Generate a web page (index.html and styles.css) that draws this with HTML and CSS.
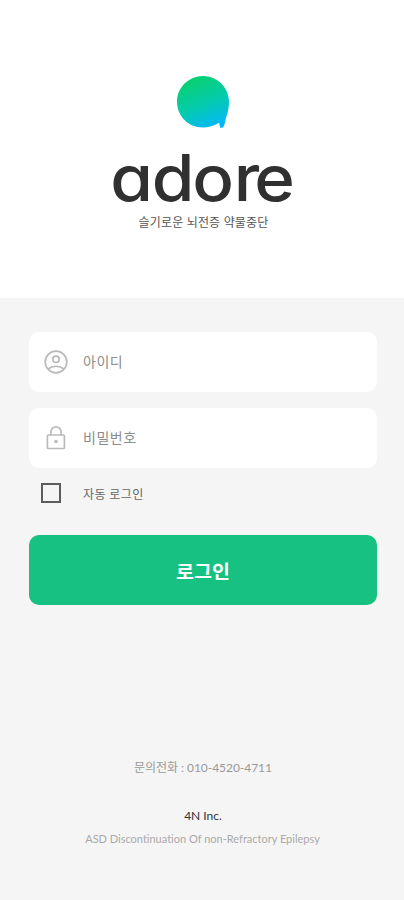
FILE: index.html
```html
<!DOCTYPE html>
<html lang="ko">
<head>
<meta charset="utf-8">
<meta name="viewport" content="width=device-width, initial-scale=1">
<title>adore</title>
<link rel="stylesheet" href="styles.css">
</head>
<body>
<header class="brand">
  <svg class="brand-mark" width="54" height="54" viewBox="0 0 54 54" aria-hidden="true">
    <defs>
      <linearGradient id="bubble" x1="0.3" y1="0.05" x2="0.7" y2="1">
        <stop offset="0" stop-color="#08d070"/>
        <stop offset="0.5" stop-color="#04ccaa"/>
        <stop offset="1" stop-color="#04b8f8"/>
      </linearGradient>
    </defs>
    <path fill="url(#bubble)" d="M27 1C12.600 1 1 12.600 1 27C1 41 12.600 52.500 26.500 52.500C32.500 52.500 38.500 51 43 47.800L44.300 52.700L47 52.700C48.500 50 49.300 47 49.800 43.500C51.800 38 53 33 53 27C53 12.600 41.400 1 27 1Z"/>
  </svg>
  <svg class="brand-name" width="190" height="80" viewBox="0 0 190 80">
    <text transform="scale(1.08 1)" x="2 40.500 78 116.500 135.500" y="53.500">adore</text>
  </svg>
  <p class="tagline">슬기로운 뇌전증 약물중단</p>
</header>
<main class="login">
  <label class="field">
    <svg class="icon" width="24" height="24" viewBox="0 0 24 24" aria-hidden="true">
      <circle cx="12" cy="12" r="10.800"/>
      <circle cx="12" cy="9.300" r="3.200"/>
      <path d="M4.300 19C8 15.300 16 15.300 19.700 19"/>
    </svg>
    <span>아이디</span>
  </label>
  <label class="field">
    <svg class="icon" width="24" height="26" viewBox="0 0 24 26" aria-hidden="true">
      <rect x="3.400" y="10" width="17" height="13.500" rx="1"/>
      <path d="M6.800 10V7A5.200 5.200 0 0 1 17.200 7V10"/>
      <circle class="keyhole" cx="12" cy="16.500" r="1.800"/>
    </svg>
    <span>비밀번호</span>
  </label>
  <label class="remember"><span class="box"></span><span>자동 로그인</span></label>
  <button class="submit" type="button">로그인</button>
</main>
<footer class="footer">
  <p class="phone">문의전화 : 010-4520-4711</p>
  <p class="company">4N Inc.</p>
  <p class="about">ASD Discontinuation Of non-Refractory Epilepsy</p>
</footer>
</body>
</html>
```
FILE: styles.css
```css
* { box-sizing: border-box; }
body {
  margin: 0;
  height: 900px;
  display: flex;
  flex-direction: column;
  background: #f5f5f5;
  font-family: Lato, "Noto Sans CJK KR", sans-serif;
  font-variant-ligatures: none;
}
p { margin: 0; white-space: nowrap; }
.brand {
  height: 298px;
  padding-top: 75px;
  display: flex;
  flex-direction: column;
  align-items: center;
  background: #fff;
}
.brand-mark { margin-left: 2px; }
.brand-name { margin-top: 18px; margin-left: 2px; overflow: visible; }
.brand-name text {
  font: 500 64px Inter, sans-serif;
  font-feature-settings: "cv11" 1;
  fill: #303030;
}
.tagline { margin-top: -14px; margin-left: 3px; font-size: 12px; letter-spacing: 0.2px; line-height: 20px; color: #555; }
.login {
  padding: 34px 27px 0 29px;
  display: flex;
  flex-direction: column;
}
.field {
  height: 60px;
  margin-bottom: 16px;
  padding-left: 15px;
  display: flex;
  align-items: center;
  gap: 15px;
  border-radius: 10px;
  background: #fff;
  font-size: 14px;
  letter-spacing: 0.5px;
  color: #8c8c8c;
}
.field span { margin-top: -3px; }
.icon { fill: none; stroke: #bababa; stroke-width: 1.7; }
.icon .keyhole { fill: #bababa; stroke: none; }
.remember {
  height: 20px;
  margin: -1px 0 32px;
  padding-left: 12px;
  display: flex;
  align-items: center;
  gap: 22px;
  font-size: 12px;
  letter-spacing: 0.4px;
  color: #666;
}
.box { width: 20px; height: 20px; border: 2px solid #5c5c5c; }
.submit {
  height: 70px;
  padding: 0;
  border: 0;
  border-radius: 10px;
  background: #16c182;
  color: #fff;
  font: 700 19.5px Lato, "Noto Sans CJK KR", sans-serif;
}
.footer {
  margin-top: auto;
  height: 142px;
  display: flex;
  flex-direction: column;
  align-items: center;
  line-height: 20px;
}
.phone { margin-left: 2px; font-size: 12px; letter-spacing: -0.05px; color: #999; }
.company { margin-top: 28px; margin-left: 2px; font-size: 12px; color: #333; }
.about { margin-top: 3px; margin-left: 1px; font-size: 11px; color: #aaa; }
```
